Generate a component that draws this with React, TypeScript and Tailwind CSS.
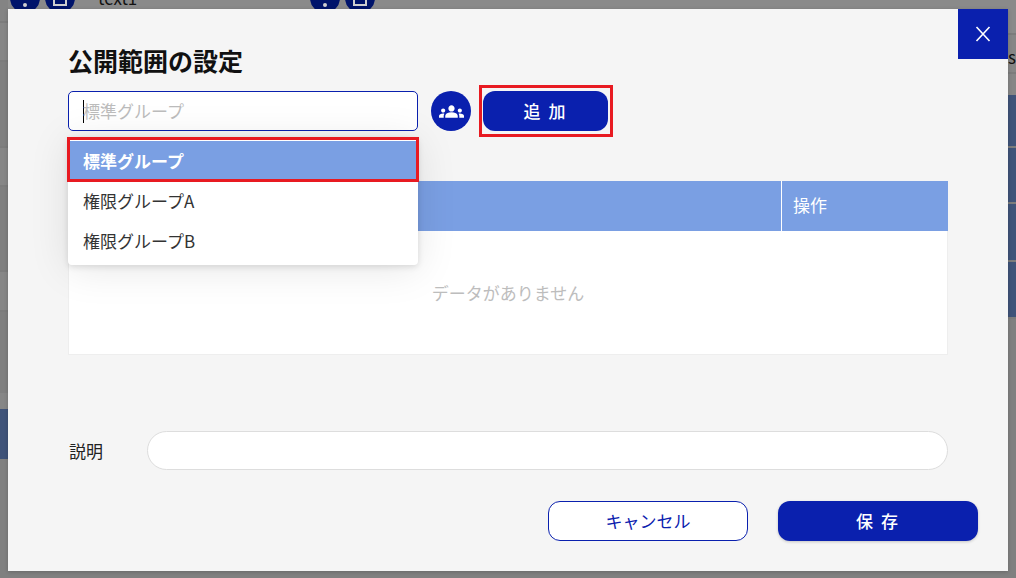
import React from 'react';
import { MdGroups } from 'react-icons/md';

const leftRows = [
  'h-[23px] border-b-2 border-[#7c7c7c] bg-[#848484]',
  'h-[39px] border-b-2 border-[#7c7c7c] bg-[#868686]',
  'h-[86px] border-b-2 border-[#7c7c7c] bg-[#7f7f7f]',
  'h-[39px] border-b-2 border-[#7c7c7c] bg-[#868686]',
  'h-[85px] border-b-2 border-[#7c7c7c] bg-[#7f7f7f]',
  'h-[40px] border-b-2 border-[#7c7c7c] bg-[#868686]',
  'h-[81px] bg-[#7f7f7f]',
  'h-[16px] bg-[#868686]',
  'h-[50px] bg-[#3f5379]',
  'h-[119px] bg-[#808080]',
];

const rightRows = [
  'h-[35px] border-b-2 border-[#7c7c7c] bg-[#8a8a8a]',
  'h-[39px] border-b-2 border-[#7c7c7c] bg-[#868686]',
  'h-[21px] bg-[#868686]',
  'h-[53px] border-b-2 border-[#7c7c7c] bg-[#3f5379]',
  'h-[56px] border-b-2 border-[#7c7c7c] bg-[#3f5379]',
  'h-[58px] border-b-2 border-[#7c7c7c] bg-[#3f5379]',
  'h-[57px] border-b-2 border-[#7c7c7c] bg-[#3f5379]',
  'h-[258px] bg-[#808080]',
];

const RowIcons = () => (
  <div className="flex gap-[5px]">
    <div className="flex h-[30px] w-[30px] items-end justify-center rounded-full bg-[#00146b] pb-[6px]">
      <div className="h-[4px] w-[4px] rounded-full bg-[#cfcfcf]" />
    </div>
    <div className="flex h-[30px] w-[30px] items-end justify-center rounded-full bg-[#00146b] pb-[7px]">
      <div className="h-[10px] w-[14px] border-2 border-[#cfcfcf]" />
    </div>
  </div>
);

const App: React.FC = () => {
  return (
    <div className="relative h-[578px] w-[1016px] overflow-hidden bg-[#808080] font-['Noto_Sans_CJK_JP','Noto_Sans',sans-serif] text-[17px] text-[#222222]">
      {/* page behind the overlay */}
      <div className="flex h-full justify-between">
        <div className="w-[8px]">
          {leftRows.map((cls, i) => (
            <div key={i} className={cls} />
          ))}
        </div>
        <div className="flex h-[13px] flex-1 items-end overflow-hidden bg-[#8a8a8a]">
          <div className="ml-[2px]"><RowIcons /></div>
          <span className="mb-[3px] ml-[23px] w-[212px] text-[#111111]">text1</span>
          <RowIcons />
        </div>
        <div className="relative w-[8px]">
          {rightRows.map((cls, i) => (
            <div key={i} className={cls} />
          ))}
          <span className="absolute left-0 top-[44px] text-[#111111]">s</span>
        </div>
      </div>

      {/* modal */}
      <div className="absolute left-[8px] top-[9px] h-[562px] w-[1000px] bg-[#f5f5f5] pl-[60px] pr-[30px] pt-[36px] shadow-[0_1px_4px_rgba(0,0,0,0.2)]">
        <button className="absolute right-0 top-0 flex h-[50px] w-[50px] items-center justify-center bg-[#0a20ae]">
          <svg width="16" height="16" viewBox="0 0 16 16" fill="none" stroke="white" strokeWidth="1.6">
            <path d="M1.5 1 L14.5 15 M14.5 1 L1.5 15" />
          </svg>
        </button>

        <h1 className="h-[30px] text-[25px] font-bold leading-[30px] text-[#111111]">公開範囲の設定</h1>

        <div className="mt-[16px] flex items-center">
          <div className="flex h-[40px] w-[350px] items-center rounded-[5px] border border-[#0a20ae] bg-white pl-[14px]">
            <span className="-mr-px h-[23px] w-px bg-black" />
            <span className="text-[#bcbcbc]">標準グループ</span>
          </div>
          <div className="ml-[13px] flex h-[40px] w-[40px] items-center justify-center rounded-full bg-[#0a20ae] text-white">
            <MdGroups size={25} />
          </div>
          <div className="relative ml-[12px]">
            <button className="h-[40px] w-[125px] rounded-[12px] bg-[#0a20ae] font-medium tracking-[2px] text-white">追 加</button>
            <div className="pointer-events-none absolute -bottom-[6px] -left-[4px] -right-[5px] -top-[6px] border-[3px] border-[#e81a21]" />
          </div>
        </div>

        <div className="mt-[50px] w-[880px] border-x border-b border-[#eeeeee] bg-white">
          <div className="-mx-px flex h-[50px] bg-[#7a9fe3] text-white">
            <div className="flex-1 border-r border-white" />
            <div className="flex w-[166px] items-center pb-[2px] pl-[11px]">操作</div>
          </div>
          <div className="flex h-[123px] items-center justify-center text-[#bdbdbd]">データがありません</div>
        </div>

        <div className="mt-[76px] flex w-[880px] items-center">
          <label className="w-[79px] pl-px text-[#222222]">説明</label>
          <input className="h-[39px] flex-1 rounded-full border border-[#dddddd] bg-white outline-none" />
        </div>

        <div className="mt-[31px] flex justify-end gap-[30px]">
          <button className="h-[40px] w-[200px] rounded-[12px] border border-[#0a20ae] bg-white text-[#0a20ae]">キャンセル</button>
          <button className="h-[40px] w-[200px] rounded-[12px] bg-[#0a20ae] font-medium tracking-[2px] text-white shadow-[0_1px_3px_rgba(0,0,0,0.2)]">保 存</button>
        </div>

        {/* dropdown */}
        <div className="absolute left-[60px] top-[128px] w-[350px] rounded-[4px] bg-white py-1 shadow-[0_4px_40px_rgba(0,0,0,0.1),0_2px_6px_rgba(0,0,0,0.12)]">
          <div className="relative flex h-[40px] items-center bg-[#7a9fe3] pl-[15px] font-bold text-white">
            標準グループ
            <div className="pointer-events-none absolute -bottom-px -left-px -right-px -top-[4px] border-[3px] border-[#e81a21]" />
          </div>
          <div className="flex h-[40px] items-center pl-[15px] text-[#333333]">権限グループA</div>
          <div className="flex h-[40px] items-center pl-[15px] text-[#333333]">権限グループB</div>
        </div>
      </div>
    </div>
  );
};

export default App;
